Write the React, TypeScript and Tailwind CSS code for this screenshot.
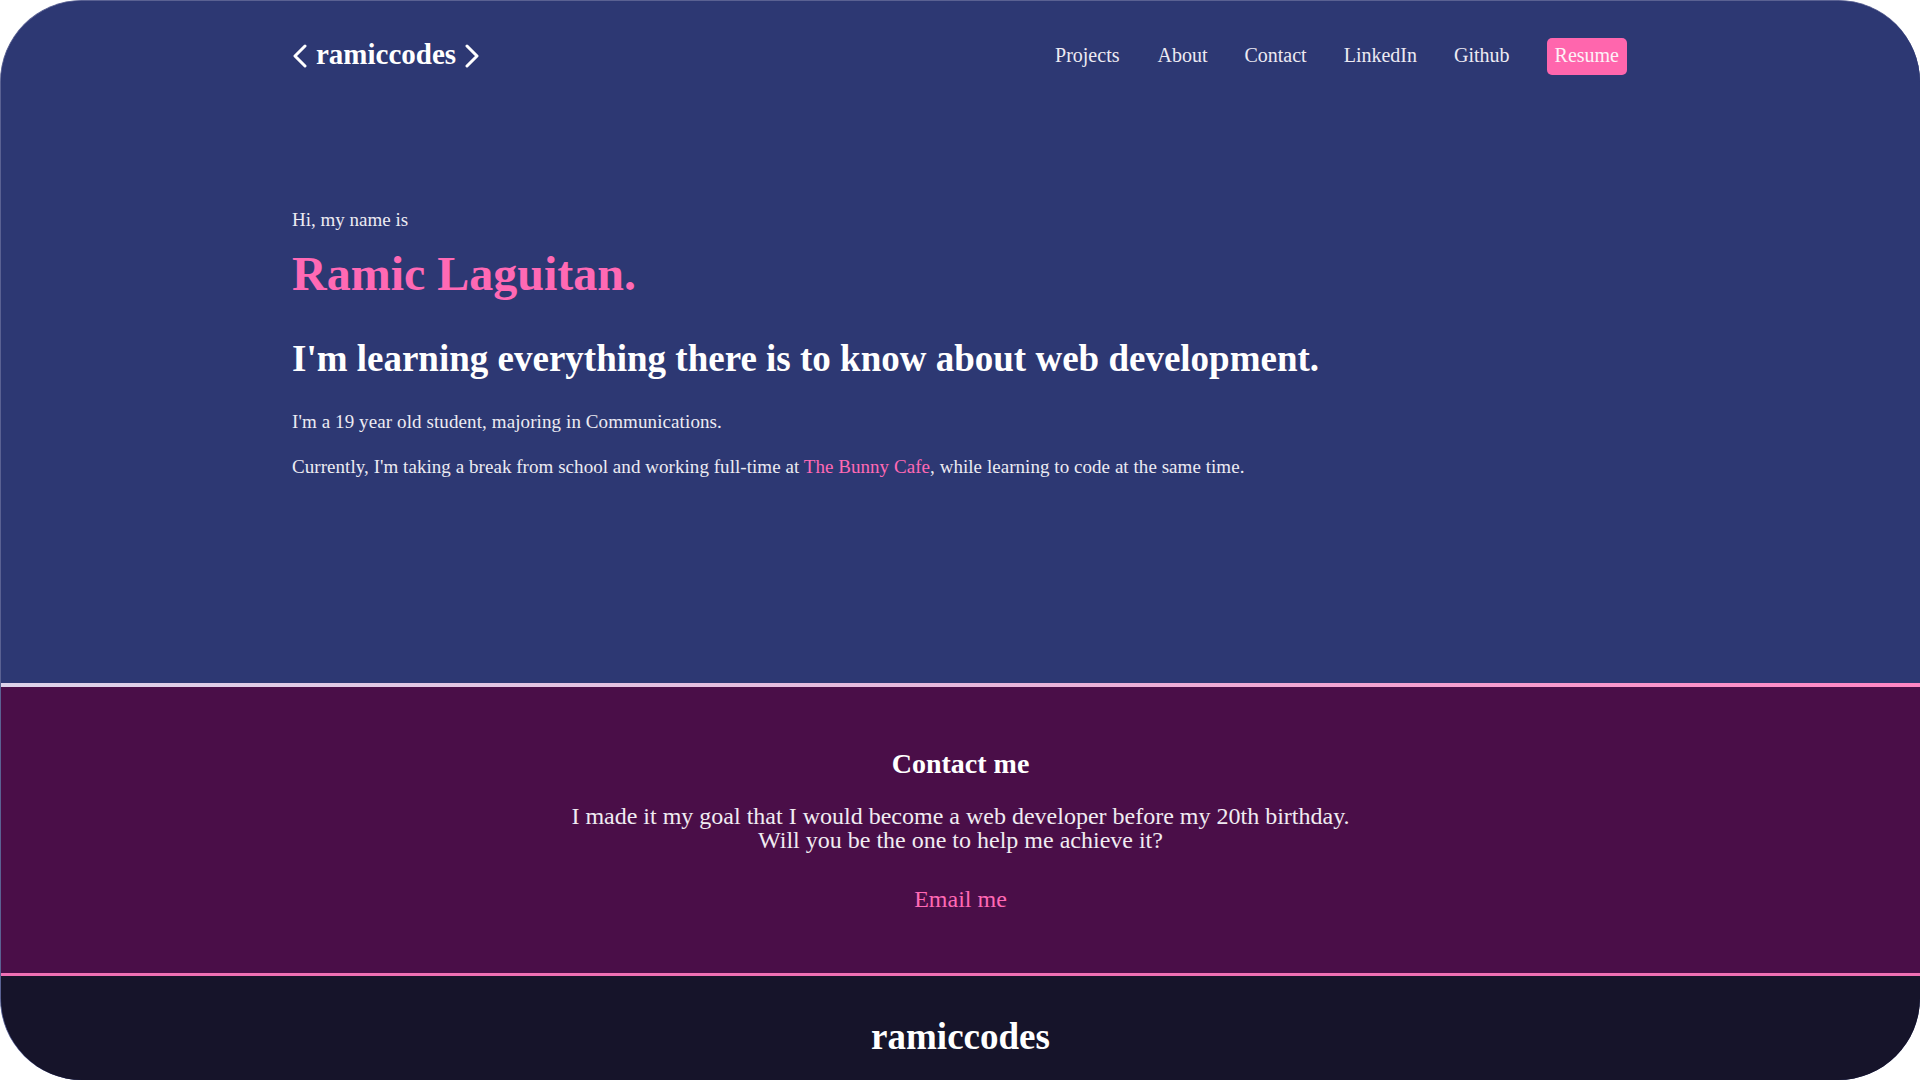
import React from "react";

const serif = { fontFamily: '"Liberation Serif", "Times New Roman", serif' };

function Chevron({ dir }: { dir: "left" | "right" }) {
  return (
    <svg width="16" height="24" viewBox="0 0 16 24" fill="none" className="shrink-0">
      {dir === "left" ? (
        <polyline points="13,2 3,12 13,22" stroke="#ffffff" strokeWidth="3" strokeLinecap="round" strokeLinejoin="round" />
      ) : (
        <polyline points="3,2 13,12 3,22" stroke="#ffffff" strokeWidth="3" strokeLinecap="round" strokeLinejoin="round" />
      )}
    </svg>
  );
}

export default function App() {
  return (
    <div className="w-[1920px] h-[1080px] bg-white overflow-hidden" style={serif}>
      <div className="w-full h-full rounded-[82px] overflow-hidden flex flex-col border-t border-l border-[#5a6192] bg-[#2d3873]">
        {/* Hero */}
        <section className="h-[682px] bg-[#2d3873] pl-[291px] pr-[293px] flex flex-col">
          <nav className="h-[111px] flex items-start pt-[37px] justify-between">
            <a className="flex items-center gap-[8px] text-white font-bold text-[29px] leading-none mt-[5px]">
              <Chevron dir="left" />
              <span className="-mt-[3px]">ramiccodes</span>
              <Chevron dir="right" />
            </a>
            <div className="flex items-center gap-[37px] text-[20px] leading-[24px] text-[#eceaf2]">
              <a className="mb-[4px] mr-[1px]">Projects</a>
              <a className="mb-[4px]">About</a>
              <a className="mb-[4px]">Contact</a>
              <a className="mb-[4px]">LinkedIn</a>
              <a className="mb-[4px]">Github</a>
              <a className="bg-[#ff66ad] text-[#fdf1f7] rounded-[5px] h-[37px] px-[8px] pb-[4px] flex items-center">Resume</a>
            </div>
          </nav>
          <div className="pt-[96px] text-[#ecebf2]">
            <p className="text-[19px] leading-[24px]">Hi, my name is</p>
            <h1 className="text-[48px] font-bold text-[#ff69b4] leading-[56px] mt-[14px]">Ramic Laguitan.</h1>
            <h2 className="text-[37px] font-bold text-white leading-[44px] mt-[35px]">
              I'm learning everything there is to know about web development.
            </h2>
            <p className="text-[19px] leading-[24px] tracking-[0.1px] mt-[29px]">I'm a 19 year old student, majoring in Communications.</p>
            <p className="text-[19px] leading-[24px] tracking-[0.05px] mt-[21px]">
              Currently, I'm taking a break from school and working full-time at{" "}
              <span className="text-[#ff69b4]">The Bunny Cafe</span>, while learning to code at the same time.
            </p>
          </div>
        </section>
        <div className="h-[4px] bg-gradient-to-r from-[#ddd3ea] via-[#e6b8dc] to-[#ff86c4]" />
        {/* Contact */}
        <section className="h-[286px] bg-[#4a0e48] flex flex-col items-center text-center text-[#f0ebf2]">
          <h3 className="text-[28px] font-bold text-white leading-[34px] mt-[60px]">Contact me</h3>
          <p className="text-[24px] leading-[24px] mt-[23px]">
            I made it my goal that I would become a web developer before my 20th birthday.
            <br />
            Will you be the one to help me achieve it?
          </p>
          <a className="text-[24px] leading-[30px] text-[#ff69b4] mt-[32px]">Email me</a>
        </section>
        <div className="h-[3px] bg-[#f070b4]" />
        {/* Footer */}
        <footer className="flex-1 bg-[#16142a] flex items-start justify-center">
          <span className="text-[37px] font-bold text-white leading-none mt-[42px]">ramiccodes</span>
        </footer>
      </div>
    </div>
  );
}
